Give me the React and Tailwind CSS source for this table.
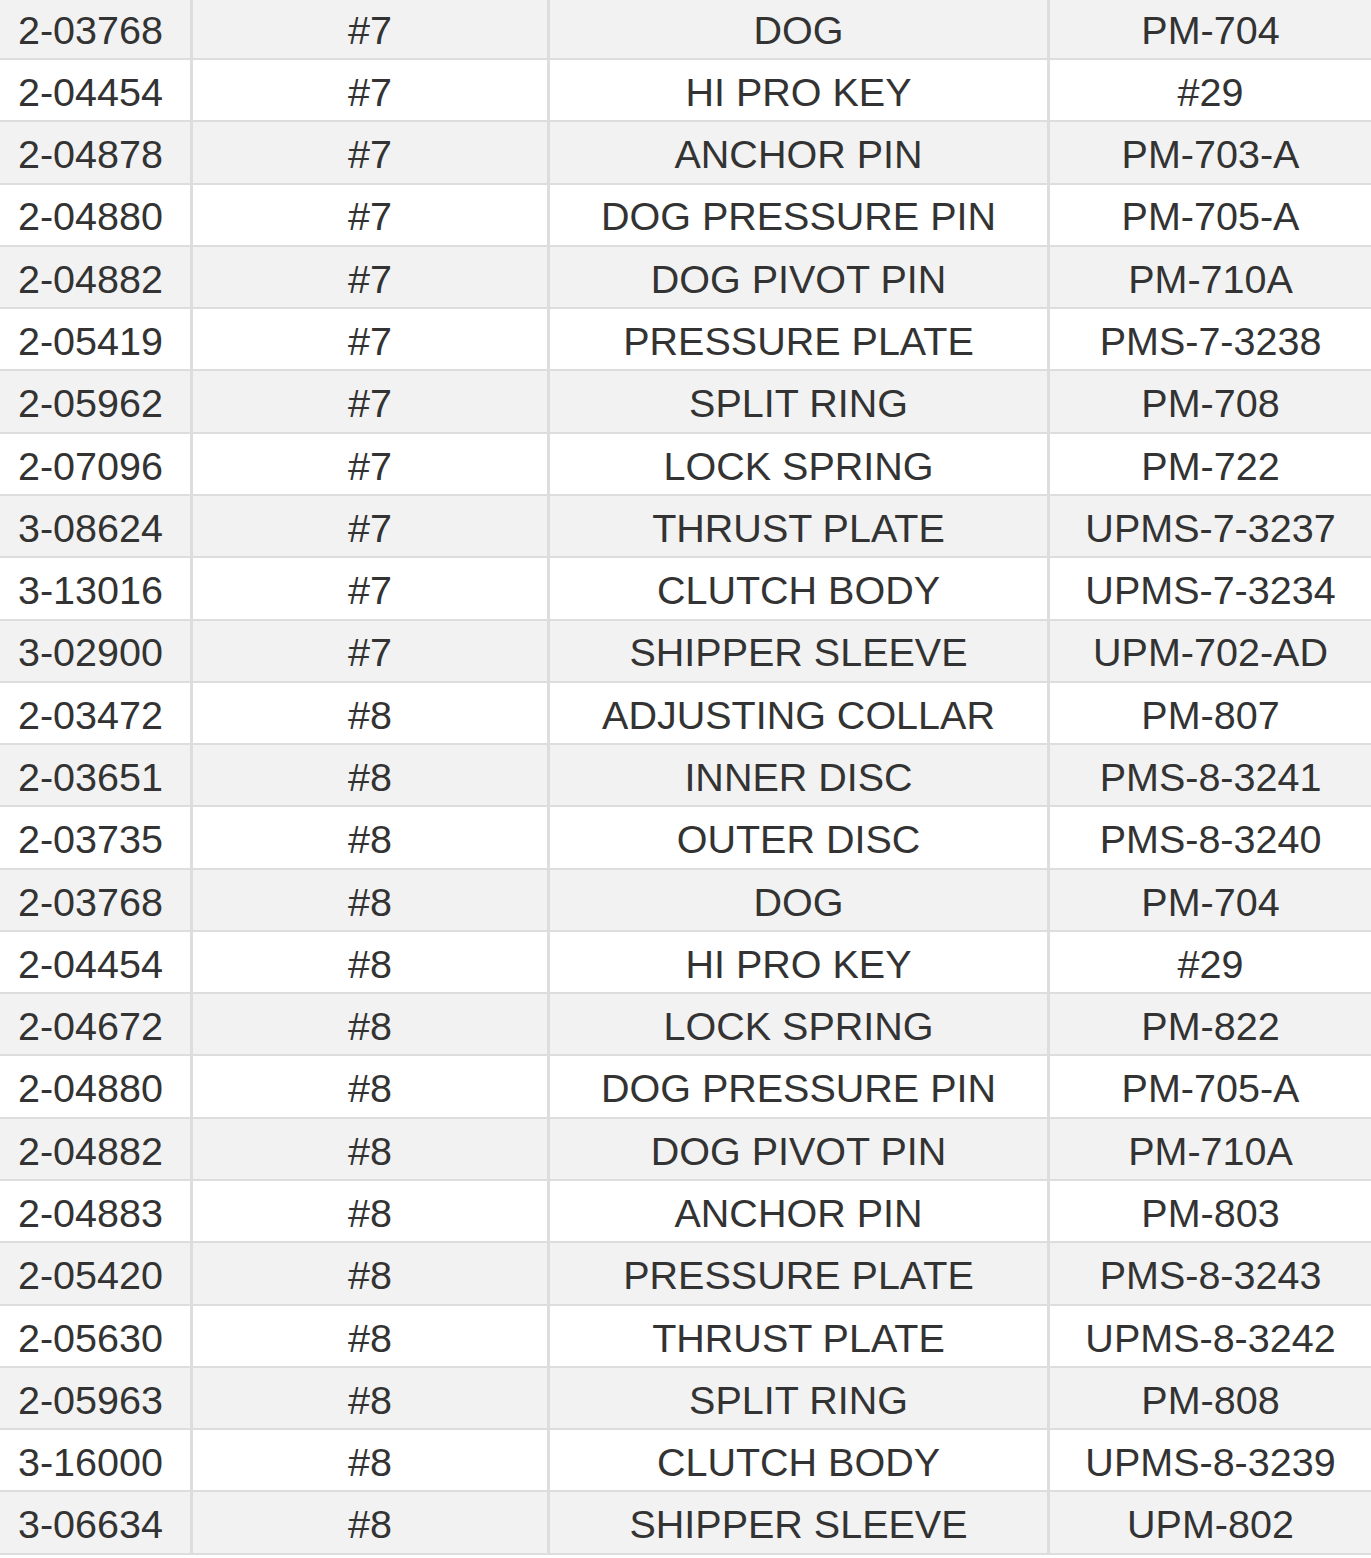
import React from "react";

const rows = [
  ["2-03768", "#7", "DOG", "PM-704"],
  ["2-04454", "#7", "HI PRO KEY", "#29"],
  ["2-04878", "#7", "ANCHOR PIN", "PM-703-A"],
  ["2-04880", "#7", "DOG PRESSURE PIN", "PM-705-A"],
  ["2-04882", "#7", "DOG PIVOT PIN", "PM-710A"],
  ["2-05419", "#7", "PRESSURE PLATE", "PMS-7-3238"],
  ["2-05962", "#7", "SPLIT RING", "PM-708"],
  ["2-07096", "#7", "LOCK SPRING", "PM-722"],
  ["3-08624", "#7", "THRUST PLATE", "UPMS-7-3237"],
  ["3-13016", "#7", "CLUTCH BODY", "UPMS-7-3234"],
  ["3-02900", "#7", "SHIPPER SLEEVE", "UPM-702-AD"],
  ["2-03472", "#8", "ADJUSTING COLLAR", "PM-807"],
  ["2-03651", "#8", "INNER DISC", "PMS-8-3241"],
  ["2-03735", "#8", "OUTER DISC", "PMS-8-3240"],
  ["2-03768", "#8", "DOG", "PM-704"],
  ["2-04454", "#8", "HI PRO KEY", "#29"],
  ["2-04672", "#8", "LOCK SPRING", "PM-822"],
  ["2-04880", "#8", "DOG PRESSURE PIN", "PM-705-A"],
  ["2-04882", "#8", "DOG PIVOT PIN", "PM-710A"],
  ["2-04883", "#8", "ANCHOR PIN", "PM-803"],
  ["2-05420", "#8", "PRESSURE PLATE", "PMS-8-3243"],
  ["2-05630", "#8", "THRUST PLATE", "UPMS-8-3242"],
  ["2-05963", "#8", "SPLIT RING", "PM-808"],
  ["3-16000", "#8", "CLUTCH BODY", "UPMS-8-3239"],
  ["3-06634", "#8", "SHIPPER SLEEVE", "UPM-802"],
];

export default function App() {
  return (
    <div
      className="w-[1371px] h-[1558px] overflow-hidden bg-white text-[#333333] text-[39.5px] leading-none"
      style={{ fontFamily: '"Liberation Sans", Arial, sans-serif' }}
    >
      <div className="-mt-[2.3px]">
        {rows.map((r, i) => (
          <div
            key={i}
            className={
              "grid grid-cols-[193px_357px_500px_1fr] h-[62.29px] border-b-[2.4px] border-[#dddddd] " +
              (i % 2 === 0 ? "bg-[#f2f2f2]" : "bg-white")
            }
          >
            <div className="flex items-center pt-[5px] pl-[18px] border-r-[3px] border-[#dddddd]">
              {r[0]}
            </div>
            <div className="flex items-center justify-center pt-[5px] border-r-[3px] border-[#dddddd]">
              {r[1]}
            </div>
            <div className="flex items-center justify-center pt-[5px] border-r-[3px] border-[#dddddd]">
              {r[2]}
            </div>
            <div className="flex items-center justify-center pt-[5px]">{r[3]}</div>
          </div>
        ))}
      </div>
    </div>
  );
}
